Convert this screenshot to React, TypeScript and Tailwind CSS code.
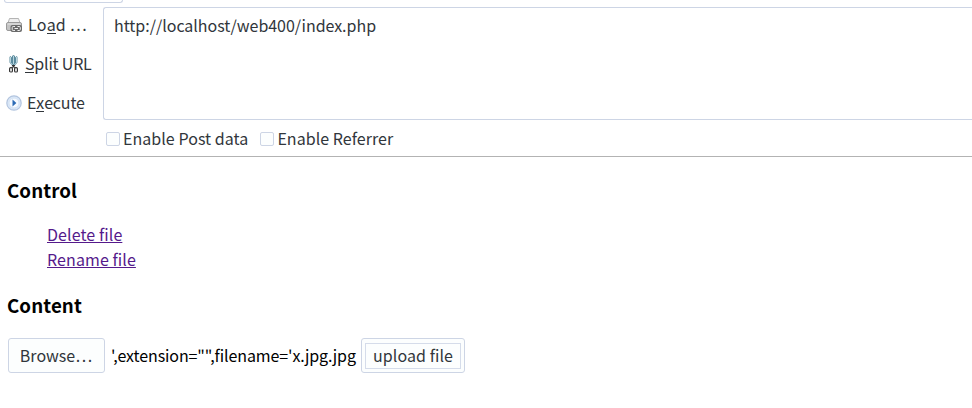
import React from "react";

function PrinterIcon() {
  return (
    <svg width="16" height="16" viewBox="0 0 16 16" className="block">
      <path d="M3.5 1.5h9L14 6H2z" fill="#eeeeee" stroke="#b4b4b4" />
      <rect x="0.5" y="5.5" width="15" height="8" rx="1.5" fill="#c4c4c4" stroke="#9a9a9a" />
      <path d="M1.5 7h13" stroke="#e6e6e6" />
      <rect x="4.5" y="8" width="11.5" height="7" rx="2" fill="#6a6a6a" />
      <path d="M9 9.5H7.2a1 1 0 0 0-1 1v2a1 1 0 0 0 1 1H9M11.5 9.5h1.8a1 1 0 0 1 1 1v2a1 1 0 0 1-1 1h-1.8M8.5 11.5h3.5" fill="none" stroke="#f0f0f0" />
    </svg>
  );
}

function ScissorsIcon() {
  return (
    <svg width="9" height="18" viewBox="0 0 9 18" className="block">
      <path d="M0.5 2v5.5L3 10.5h3L8.5 7.5V2L7.5 1 6 2.5V1L4.5 0 3 1v1.5L1.5 1z" fill="#5b8b9e" />
      <path d="M1.5 2v5.5L3.5 10M7.5 2v5.5L5.5 10M4.5 1v8" fill="none" stroke="#c3dde5" strokeWidth="0.9" />
      <path d="M3 10.5h3M4.5 10v2.5M3 12.5l1.5-1 1.5 1" fill="none" stroke="#333" strokeWidth="1.2" />
      <rect x="0.6" y="12.6" width="2.8" height="4.4" rx="1.1" fill="none" stroke="#333" strokeWidth="1.2" />
      <rect x="5.6" y="12.6" width="2.8" height="4.4" rx="1.1" fill="none" stroke="#333" strokeWidth="1.2" />
    </svg>
  );
}

function PlayIcon() {
  return (
    <svg width="16" height="16" viewBox="0 0 16 16" className="block">
      <circle cx="8" cy="8" r="7.2" fill="#dbe8f8" stroke="#b3c5df" strokeWidth="1.2" />
      <circle cx="8" cy="8" r="5" fill="#f7fbff" stroke="#d3e2f4" />
      <path d="M6.5 4.4v7.2L10.4 8z" fill="#2c6bb5" />
    </svg>
  );
}

function Key({ children }: { children: string }) {
  return <span className="inline-block h-[18px] border-b border-[#31363b] leading-none">{children}</span>;
}

function Check({ label }: { label: string }) {
  return (
    <label className="flex items-center tracking-[0.05px]">
      <span className="mr-[3px] size-[14px] rounded-[2px] border border-[#cdd5e5] bg-[#fcfefe]" />
      {label}
    </label>
  );
}

export default function App() {
  return (
    <div className="h-[408px] w-[972px] overflow-hidden bg-white font-['Noto_Sans_CJK_SC','Noto_Sans',sans-serif] text-[16px] leading-[25px] whitespace-nowrap text-[#31363b]">
      <header className="h-[157px] border-b border-[#b3b3b3]">
        <div className="ml-[4px] h-[3px] w-[119px] rounded-b-[3px] border border-t-0 border-[#cdd5e5]" />
        <div className="flex">
          <nav className="w-[103px] pt-[9px]">
            <div className="flex h-[25px] items-center pl-[6px]">
              <PrinterIcon />
              <span className="ml-[6px] tracking-[0.22px]">Lo<Key>a</Key>d …</span>
            </div>
            <div className="mt-[14px] flex h-[25px] items-center pl-[9px]">
              <ScissorsIcon />
              <span className="ml-[7px] tracking-[-0.2px]"><Key>S</Key>plit URL</span>
            </div>
            <div className="mt-[14px] flex h-[25px] items-center pl-[6px]">
              <PlayIcon />
              <span className="ml-[5px] tracking-[-0.14px]">E<Key>x</Key>ecute</span>
            </div>
          </nav>
          <div className="mt-[4px] h-[113px] flex-1 rounded-l-[3px] border border-r-0 border-[#cdd5e5] bg-white pt-[5px] pl-[10px] tracking-[-0.02px]">
            http://localhost/web400/index.php
          </div>
        </div>
        <div className="mt-[6px] flex gap-[12px] pl-[106px]">
          <Check label="Enable Post data" />
          <Check label="Enable Referrer" />
        </div>
      </header>
      <main className="pl-[7px] text-black">
        <h3 className="pt-[18px] text-[18.72px] leading-[30px] font-bold tracking-[0.1px]">Control</h3>
        <div className="mt-[17px] flex flex-col items-start pl-[40px] tracking-[0.09px] text-[#551a8b]">
          <a className="underline">Delete file</a>
          <a className="underline">Rename file</a>
        </div>
        <h3 className="mt-[18px] text-[18.72px] leading-[30px] font-bold tracking-[0.1px]">Content</h3>
        <div className="mt-[18px] flex items-center pl-px">
          <button className="h-[35px] w-[97px] rounded-[3px] border border-[#cdd5e5] bg-[#fcfefe] pr-px text-[#31363b]">Browse…</button>
          <span className="ml-[6px] w-[250px] tracking-[-0.1px]">',extension="",filename='x.jpg.jpg</span>
          <button className="h-[35px] w-[104px] rounded-[3px] border border-[#cdd5e5] bg-[#fcfefe] p-[3px] text-[#31363b]">
            <span className="flex h-[26px] items-center justify-center border border-[#d5dcea] tracking-[0.08px]">upload file</span>
          </button>
        </div>
      </main>
    </div>
  );
}
